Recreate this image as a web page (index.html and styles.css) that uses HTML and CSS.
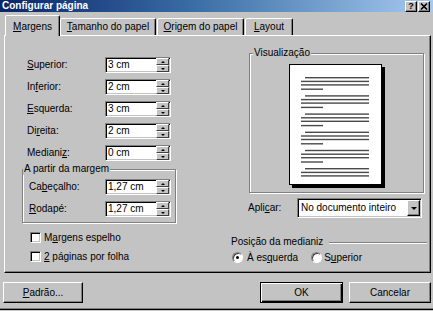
FILE: index.html
```html
<!DOCTYPE html>
<html lang="pt">
<head>
<meta charset="utf-8">
<title>Configurar página</title>
<link rel="stylesheet" href="styles.css">
</head>
<body>
<div class="window">
  <div class="titlebar">
    <span class="title">Configurar página</span>
    <div class="caption-buttons">
      <span class="cap-btn">?</span>
      <span class="cap-btn"><svg width="8" height="7" viewBox="0 0 8 7"><path d="M1 0.5 L7 6.5 M7 0.5 L1 6.5" stroke="#000" stroke-width="1.6" fill="none"/></svg></span>
    </div>
  </div>

  <div class="tabs">
    <div class="tab active tab-margens"><u>M</u>argens</div>
    <div class="tab tab-tamanho"><u>T</u>amanho do papel</div>
    <div class="tab tab-origem"><u>O</u>rigem do papel</div>
    <div class="tab tab-layout"><u>L</u>ayout</div>
  </div>

  <div class="panel">
    <div class="col-left">
      <div class="field">
        <span class="label"><u>S</u>uperior:</span>
        <div class="spin"><span class="val">3 cm</span><span class="spinner"><span class="sb up"></span><span class="sb down"></span></span></div>
      </div>
      <div class="field">
        <span class="label">In<u>f</u>erior:</span>
        <div class="spin"><span class="val">2 cm</span><span class="spinner"><span class="sb up"></span><span class="sb down"></span></span></div>
      </div>
      <div class="field">
        <span class="label"><u>E</u>squerda:</span>
        <div class="spin"><span class="val">3 cm</span><span class="spinner"><span class="sb up"></span><span class="sb down"></span></span></div>
      </div>
      <div class="field">
        <span class="label">Di<u>r</u>eita:</span>
        <div class="spin"><span class="val">2 cm</span><span class="spinner"><span class="sb up"></span><span class="sb down"></span></span></div>
      </div>
      <div class="field">
        <span class="label">Mediani<u>z</u>:</span>
        <div class="spin"><span class="val">0 cm</span><span class="spinner"><span class="sb up"></span><span class="sb down"></span></span></div>
      </div>

      <div class="group group-margem">
        <span class="group-title">A partir da margem</span>
        <div class="field inner">
          <span class="label">Ca<u>b</u>eçalho:</span>
          <div class="spin"><span class="val">1,27 cm</span><span class="spinner"><span class="sb up"></span><span class="sb down"></span></span></div>
        </div>
        <div class="field inner last">
          <span class="label"><u>R</u>odapé:</span>
          <div class="spin"><span class="val">1,27 cm</span><span class="spinner"><span class="sb up"></span><span class="sb down"></span></span></div>
        </div>
      </div>

      <div class="checks">
        <div class="check"><span class="box"></span><span>M<u>a</u>rgens espelho</span></div>
        <div class="check"><span class="box"></span><span><u>2</u> páginas por folha</span></div>
      </div>
    </div>

    <div class="col-right">
      <div class="group group-preview">
        <span class="group-title">Visualização</span>
        <svg class="page" width="96" height="124" viewBox="0 0 96 124">
          <defs>
            <g id="para">
              <rect x="16" y="0" width="64" height="1.4" fill="#4a4a4a"/>
              <rect x="12" y="3.7" width="68" height="1.4" fill="#4a4a4a"/>
              <rect x="12" y="7.2" width="68" height="1.4" fill="#4a4a4a"/>
              <rect x="12" y="11.5" width="22" height="1.4" fill="#4a4a4a"/>
            </g>
          </defs>
          <rect x="3" y="3" width="93" height="121" fill="#000"/>
          <rect x="0.5" y="0.5" width="92" height="120" fill="#fff" stroke="#000" stroke-width="1"/>
          <use href="#para" y="13"/>
          <use href="#para" y="31.2"/>
          <use href="#para" y="49.4"/>
          <use href="#para" y="67.6"/>
          <use href="#para" y="85.8"/>
          <rect x="16" y="104" width="64" height="1.4" fill="#4a4a4a"/>
          <rect x="12" y="107.7" width="68" height="1.4" fill="#4a4a4a"/>
          <rect x="12" y="111.2" width="68" height="1.4" fill="#4a4a4a"/>
        </svg>
      </div>

      <div class="apply">
        <span class="apply-label">Apli<u>c</u>ar:</span>
        <div class="select"><span class="val">No documento inteiro</span><span class="drop"></span></div>
      </div>

      <div class="gutter-head"><span>Posição da medianiz</span><span class="rule"></span></div>
      <div class="radios">
        <div class="radio-item"><span class="radio checked"></span><span>À es<u>q</u>uerda</span></div>
        <div class="radio-item second"><span class="radio"></span><span>S<u>u</u>perior</span></div>
      </div>
    </div>
  </div>

  <div class="buttons">
    <div class="btn btn-padrao"><u>P</u>adrão...</div>
    <div class="btn btn-ok default">OK</div>
    <div class="btn btn-cancel">Cancelar</div>
  </div>
</div>
</body>
</html>
```

FILE: styles.css
```css
html, body {
  margin: 0;
  padding: 0;
}
body {
  width: 433px;
  height: 311px;
  overflow: hidden;
  background: #c3c3c3;
  font-family: "Liberation Sans", Arial, sans-serif;
  font-size: 10px;
  line-height: 12px;
  color: #000;
}
u { text-underline-offset: 1px; }

.window {
  height: 309px;
  box-sizing: border-box;
  border-bottom: 1px solid #808080;
  box-shadow: 0 1px 0 #000;
}

/* title bar */
.titlebar {
  height: 12px;
  display: flex;
  align-items: center;
  background: linear-gradient(to right, #0a246a 0%, #3a6ea5 45%, #a6caf0 100%);
}
.title {
  color: #fff;
  font-weight: bold;
  padding-left: 2px;
  line-height: 12px;
}
.caption-buttons {
  margin-left: auto;
  display: flex;
  gap: 1px;
  padding-right: 3px;
}
.cap-btn {
  width: 12px;
  height: 11px;
  box-sizing: border-box;
  background: #c3c3c3;
  border: 1px solid;
  border-color: #fff #000 #000 #fff;
  box-shadow: inset -1px -1px #808080;
  display: flex;
  align-items: center;
  justify-content: center;
  font-weight: bold;
  font-size: 9px;
  line-height: 9px;
}

/* tabs */
.tabs {
  margin-top: 3px;
  height: 20px;
  display: flex;
  align-items: flex-end;
  padding-left: 5px;
}
.tab {
  height: 17px;
  box-sizing: border-box;
  border: 1px solid;
  border-bottom: none;
  border-color: #fff #000 transparent #fff;
  box-shadow: inset -1px 0 #808080;
  border-radius: 2px 2px 0 0;
  text-align: center;
  line-height: 16px;
  background: #c3c3c3;
}
.tab.active {
  height: 21px;
  margin-bottom: -1px;
  padding-top: 3px;
  position: relative;
  z-index: 1;
}
.tab-margens { width: 55px; }
.tab-tamanho { width: 96px; }
.tab-origem { width: 87px; margin-left: 1px; }
.tab-layout { width: 48px; margin-left: 1px; }

/* panel */
.panel {
  margin-left: 4px;
  width: 427px;
  height: 238px;
  box-sizing: border-box;
  border: 1px solid;
  border-color: #fff #000 #000 #fff;
  box-shadow: inset -1px -1px #808080;
  display: flex;
}
.col-left {
  width: 226px;
  padding: 21px 0 0 17px;
  box-sizing: border-box;
}
.field {
  display: flex;
  align-items: center;
  height: 16px;
  margin-bottom: 6px;
  padding-left: 5px;
}
.label { width: 78px; }
.field.inner { padding-left: 6px; }
.field.inner .label { width: 76px; }
.field.inner.last { margin-bottom: 0; }

.spin {
  width: 66px;
  height: 16px;
  box-sizing: border-box;
  background: #fff;
  border: 1px solid;
  border-color: #808080 #fff #fff #808080;
  box-shadow: inset 1px 1px #000, inset -1px -1px #c3c3c3;
  display: flex;
  align-items: center;
}
.spin .val { padding-left: 2px; }
.spinner {
  margin-left: auto;
  margin-right: 1px;
  width: 13px;
  align-self: stretch;
  display: flex;
  flex-direction: column;
}
.sb {
  flex: 1;
  box-sizing: border-box;
  background: #c3c3c3;
  border: 1px solid;
  border-color: #fff #404040 #404040 #fff;
  display: flex;
  align-items: center;
  justify-content: center;
}
.sb::before {
  content: "";
  border-left: 2px solid transparent;
  border-right: 2px solid transparent;
}
.sb.up::before { border-bottom: 2px solid #000; }
.sb.down::before { border-top: 2px solid #000; }

/* group boxes */
.group {
  position: relative;
  box-sizing: border-box;
  border: 1px solid #808080;
  box-shadow: inset 1px 1px #fff, 1px 1px #fff;
}
.group-title {
  position: absolute;
  top: -7px;
  left: 0;
  padding: 0 1px;
  background: #c3c3c3;
  line-height: 12px;
  white-space: nowrap;
}
.group-margem {
  margin-top: 8px;
  width: 154px;
  padding: 9px 0 5px 0;
}

.checks {
  margin-top: 9px;
  padding-left: 8px;
}
.check {
  display: flex;
  align-items: center;
  height: 11px;
  gap: 3px;
  margin-bottom: 8px;
}
.box, .radio {
  width: 11px;
  height: 11px;
  box-sizing: border-box;
  background: #fff;
  border: 1px solid;
  border-color: #808080 #fff #fff #808080;
  box-shadow: inset 1px 1px #000, inset -1px -1px #c3c3c3;
  flex: none;
}

/* right column */
.col-right {
  flex: 1;
  padding-top: 17px;
}
.group-preview {
  margin-left: 18px;
  width: 175px;
  padding: 10px 0 4px 39px;
}
.group-preview .group-title { left: 3px; }
.page { display: block; }

.apply {
  margin-top: 5px;
  display: flex;
  align-items: center;
  padding-left: 17px;
}
.apply-label { width: 49px; }
.select {
  width: 125px;
  height: 20px;
  box-sizing: border-box;
  background: #fff;
  border: 1px solid;
  border-color: #808080 #fff #fff #808080;
  box-shadow: inset 1px 1px #000, inset -1px -1px #c3c3c3;
  display: flex;
  align-items: center;
}
.select .val { padding-left: 3px; }
.drop {
  margin-left: auto;
  margin-right: 1px;
  width: 13px;
  height: 16px;
  box-sizing: border-box;
  background: #c3c3c3;
  border: 1px solid;
  border-color: #fff #000 #000 #fff;
  box-shadow: inset -1px -1px #808080;
  display: flex;
  align-items: center;
  justify-content: center;
}
.drop::before {
  content: "";
  border-left: 3px solid transparent;
  border-right: 3px solid transparent;
  border-top: 3px solid #000;
}

.gutter-head {
  margin-top: 18px;
  display: flex;
  align-items: center;
  height: 12px;
}
.rule {
  flex: 1;
  margin: 1px 3px 0 6px;
  border-top: 1px solid #808080;
  border-bottom: 1px solid #fff;
}
.radios {
  margin-top: 4px;
  display: flex;
  padding-left: 1px;
}
.radio-item {
  display: flex;
  align-items: center;
  gap: 4px;
  height: 11px;
}
.radio-item.second { margin-left: 13px; gap: 2px; }
.radio {
  border-radius: 50%;
  box-shadow: inset 1px 1px #404040;
  display: flex;
  align-items: center;
  justify-content: center;
}
.radio.checked::after {
  content: "";
  width: 3px;
  height: 3px;
  border-radius: 50%;
  background: #000;
}

/* bottom buttons */
.buttons {
  margin-top: 9px;
  display: flex;
  padding: 0 2px 0 3px;
}
.btn {
  height: 21px;
  box-sizing: border-box;
  border: 1px solid;
  border-color: #fff #000 #000 #fff;
  box-shadow: inset -1px -1px #808080;
  text-align: center;
  line-height: 19px;
}
.btn-padrao { width: 80px; }
.btn-ok { width: 83px; margin-left: auto; }
.btn-cancel { width: 82px; margin-left: 6px; }
.btn.default {
  border-color: #000;
  box-shadow: inset 1px 1px #fff, inset -1px -1px #000, inset -2px -2px #808080;
}
```
